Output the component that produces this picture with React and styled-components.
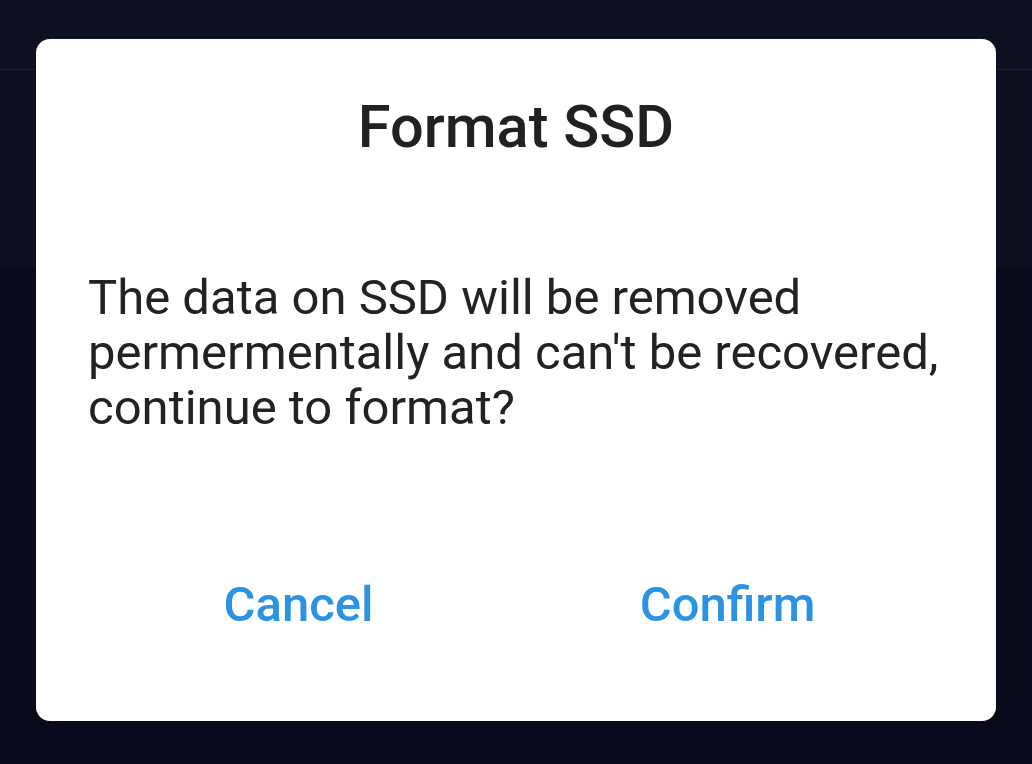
import React from 'react';
import styled, { createGlobalStyle } from 'styled-components';

const GlobalStyle = createGlobalStyle`
  html, body {
    margin: 0;
    padding: 0;
    background: #080b1c;
    font-family: Roboto, "Noto Sans", sans-serif;
  }
`;

const Page = styled.div`
  width: 1032px;
  height: 764px;
  display: flex;
  flex-direction: column;
  background: #080b1c;
  overflow: hidden;
  position: relative;
`;

const TopBar = styled.div`
  height: 69px;
  background: #0d1121;
  border-bottom: 1px solid #1c2030;
`;

const Header = styled.div`
  height: 198px;
  background: #0b0f20;
`;

const Overlay = styled.div`
  position: absolute;
  inset: 0;
  display: flex;
  justify-content: center;
  padding-top: 39px;
`;

const Dialog = styled.div`
  width: 960px;
  height: 682px;
  box-sizing: border-box;
  background: #ffffff;
  border-radius: 14px;
  padding: 0 52px;
  display: flex;
  flex-direction: column;
`;

const Title = styled.h2`
  margin: 0;
  padding-top: 53px;
  font-size: 59.5px;
  font-weight: 500;
  line-height: 70px;
  color: #212121;
  text-align: center;
`;

const Message = styled.p`
  margin: 0;
  padding-top: 108px;
  font-size: 49px;
  line-height: 55px;
  color: #222222;
`;

const Actions = styled.div`
  margin: auto 2px 0 -4px;
  padding-bottom: 88px;
  display: flex;
`;

const ActionButton = styled.button`
  flex: 1;
  border: none;
  background: none;
  padding: 0;
  font-family: inherit;
  font-size: 49px;
  font-weight: 500;
  line-height: 56px;
  color: #2b93e2;
  text-align: center;
`;

export default function App() {
  return (
    <>
      <GlobalStyle />
      <Page>
        <TopBar />
        <Header />
        <Overlay>
          <Dialog>
            <Title>Format SSD</Title>
            <Message>
              The data on SSD will be removed permermentally and can't be
              recovered, continue to format?
            </Message>
            <Actions>
              <ActionButton>Cancel</ActionButton>
              <ActionButton>Confirm</ActionButton>
            </Actions>
          </Dialog>
        </Overlay>
      </Page>
    </>
  );
}
